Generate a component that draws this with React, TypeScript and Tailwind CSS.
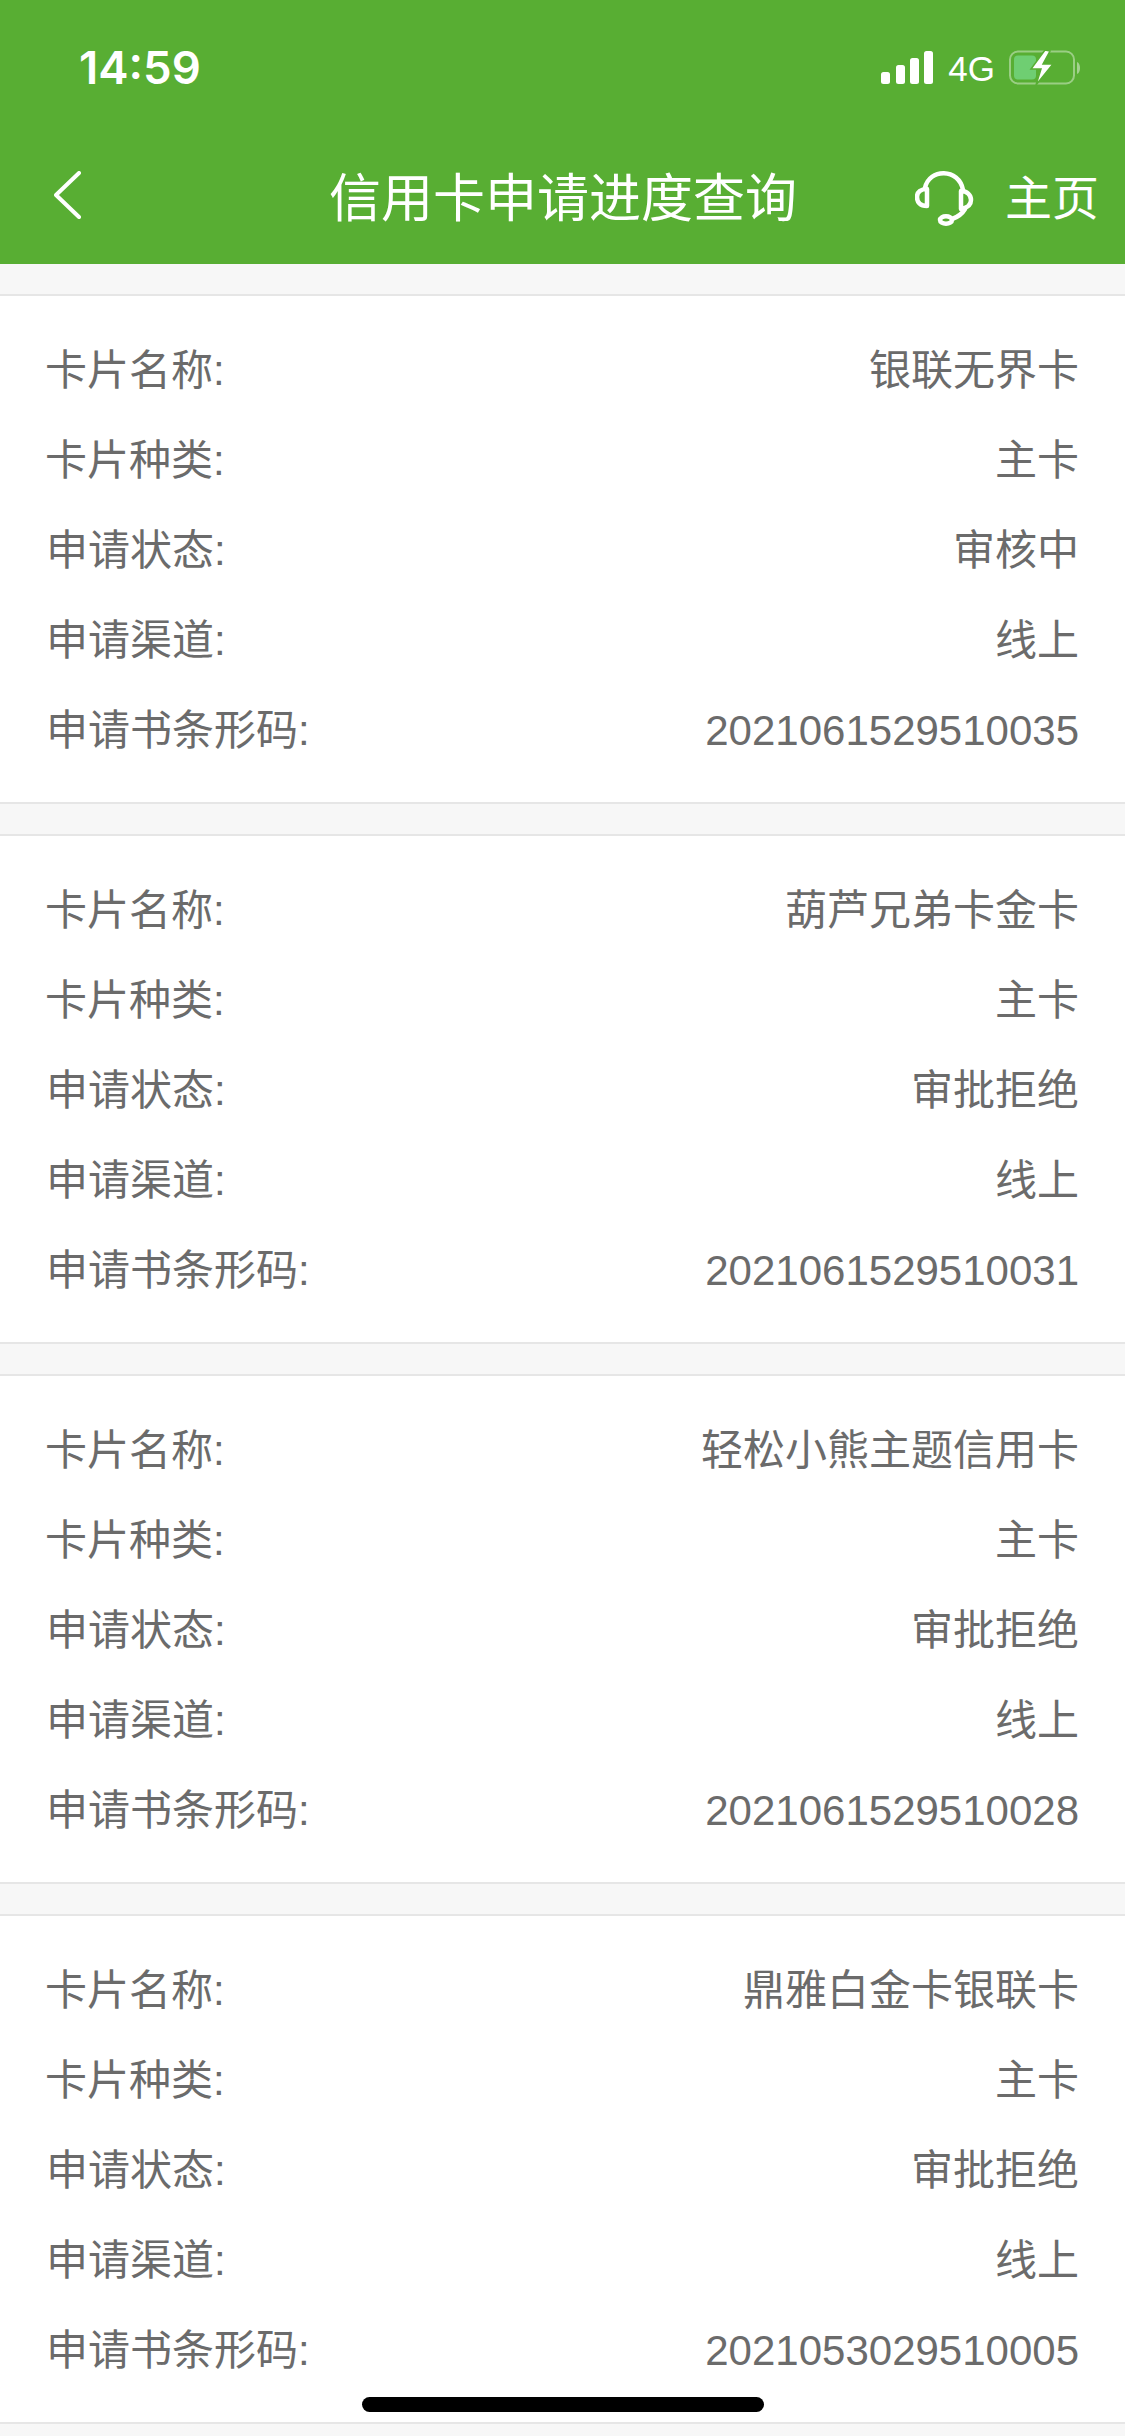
const cards = [
  { name: '银联无界卡', status: '审核中', code: '2021061529510035' },
  { name: '葫芦兄弟卡金卡', status: '审批拒绝', code: '2021061529510031' },
  { name: '轻松小熊主题信用卡', status: '审批拒绝', code: '2021061529510028' },
  { name: '鼎雅白金卡银联卡', status: '审批拒绝', code: '2021053029510005' },
]

const cjk = "font-['Liberation_Sans','Noto_Sans_CJK_SC',sans-serif]"

function StatusBar() {
  return (
    <div className="flex h-[88px] items-center justify-between pl-[79px] pr-[40px] pt-[48px]">
      <span className="font-['Inter',sans-serif] text-[45.5px] font-semibold leading-none text-white">14:59</span>
      <div className="flex items-center">
        <svg width="52" height="34" viewBox="0 0 52 34" fill="#fff">
          <rect x="0" y="21" width="9" height="12" rx="2.5" />
          <rect x="15" y="14" width="9" height="19" rx="2.5" />
          <rect x="29" y="7" width="9" height="26" rx="2.5" />
          <rect x="43" y="0" width="9" height="33" rx="2.5" />
        </svg>
        <span className="ml-[15px] font-['Liberation_Sans',sans-serif] text-[35px] leading-none text-white">4G</span>
        <svg className="ml-[14px]" width="76" height="36" viewBox="0 0 76 36">
          <rect x="1" y="1.5" width="64" height="32" rx="8" fill="none" stroke="#fff" strokeOpacity="0.4" strokeWidth="2" />
          <rect x="5" y="5.5" width="22" height="24" rx="4" fill="#6fce72" />
          <path d="M68 12 C72 13 72 23 68 24 Z" fill="#fff" fillOpacity="0.45" />
          <path d="M36 0 L22 19 L32 19 L27 35 L44 14 L34 14 L41 1 Z" fill="#fff" stroke="#58ae33" strokeWidth="1.5" />
        </svg>
      </div>
    </div>
  )
}

function NavBar() {
  return (
    <div className="relative flex h-[176px] items-center justify-between pl-[54px] pr-[26px] pt-[44px]">
      <svg className="mb-[6px]" width="28" height="48" viewBox="0 0 28 48" fill="none" stroke="#fff" strokeWidth="4" strokeLinecap="round" strokeLinejoin="round">
        <path d="M25 2 L2 24 L25 46" />
      </svg>
      <h1 className={`absolute left-[329px] top-[75px] text-[52px] font-normal leading-[72px] text-white ${cjk}`}>信用卡申请进度查询</h1>
      <div className="flex items-center">
        <svg width="60" height="58" viewBox="0 0 60 58" fill="none" stroke="#fff" strokeWidth="4.5" strokeLinecap="round" strokeLinejoin="round">
          <path d="M10 19 C14 -1 44 -1 48 21" />
          <path d="M12 20 L12 37 C5 37 2 33 2 28 C2 23 6 20 12 20 Z" />
          <path d="M46 22 L46 40 C52 39 56 36 56 31 C56 26 52 22 46 22 Z" />
          <path d="M50 40 C47 45 43 48 37 50" />
          <ellipse cx="31" cy="51" rx="6" ry="3.8" />
        </svg>
        <span className={`ml-[30px] text-[47px] leading-none text-white ${cjk}`}>主页</span>
      </div>
    </div>
  )
}

function Row({ label, value, shift }: { label: string; value: string; shift?: boolean }) {
  return (
    <div className="flex h-[90px] items-center justify-between">
      <span className={shift ? 'pl-[1px]' : ''}>{label}</span>
      <span>{value}</span>
    </div>
  )
}

export default function App() {
  return (
    <div className={`relative min-h-[2436px] overflow-hidden bg-[#f7f7f7] ${cjk}`}>
      <div className="bg-[#58ae33]">
        <StatusBar />
        <NavBar />
      </div>
      <div className="flex flex-col gap-[30px] pt-[30px]">
        {cards.map((card) => (
          <div key={card.code} className="border-y-2 border-[#e6e6e6] bg-white pb-[26px] pl-[45px] pr-[46px] pt-[30px] text-[42px] leading-none text-[#6b6b6b]">
            <Row label="卡片名称:" value={card.name} />
            <Row label="卡片种类:" value="主卡" />
            <Row label="申请状态:" value={card.status} shift />
            <Row label="申请渠道:" value="线上" shift />
            <Row label="申请书条形码:" value={card.code} shift />
          </div>
        ))}
      </div>
      <div className="absolute left-[362px] top-[2397px] h-[15px] w-[402px] rounded-full bg-black" />
    </div>
  )
}
